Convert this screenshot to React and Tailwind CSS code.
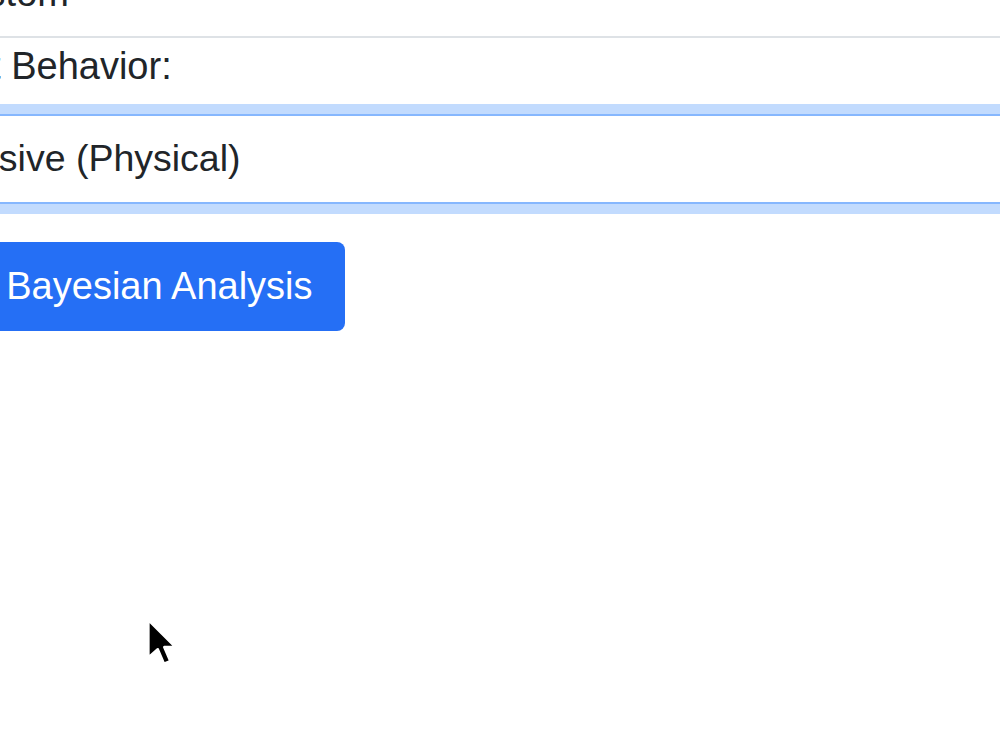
export default function App() {
  return (
    <div
      className="relative w-[1000px] h-[750px] overflow-hidden bg-white text-[#212529]"
      style={{ fontFamily: '"Liberation Sans", Arial, sans-serif' }}
    >
      <div className="-ml-[140px] -mt-[51px] w-[1300px]">
        <div className="h-[89px] border-2 border-[#dee2e6] rounded-[9px] pl-[76px] pr-[18px] py-[14px] text-[38px] leading-[57px]">
          Custom
        </div>
        <label className="block ml-[35px] text-[38px] leading-[57px] mb-[19px]">Target Behavior:</label>
        <div className="h-[90px] border-2 border-[#86b7fe] rounded-[9px] px-[18px] py-[14px] text-[37.5px] leading-[57px] shadow-[0_0_0_10px_rgba(13,110,253,0.25)]">
          Aggressive (Physical)
        </div>
        <button className="mt-[38px] ml-[48px] h-[89px] pl-[18px] pr-[32px] bg-[#256ff5] text-white text-[38px] leading-[57px] rounded-[8px]">
          Run Bayesian Analysis
        </button>
      </div>
      <svg className="absolute left-[146px] top-[618px]" width="36" height="52" viewBox="0 0 17 25">
        <path d="M1 1 L1 19 L5.5 15 L8.5 22 L11.5 20.7 L8.6 14 L14 14 Z" fill="#000" stroke="#fff" strokeWidth="1.2" strokeLinejoin="round" />
      </svg>
    </div>
  );
}
